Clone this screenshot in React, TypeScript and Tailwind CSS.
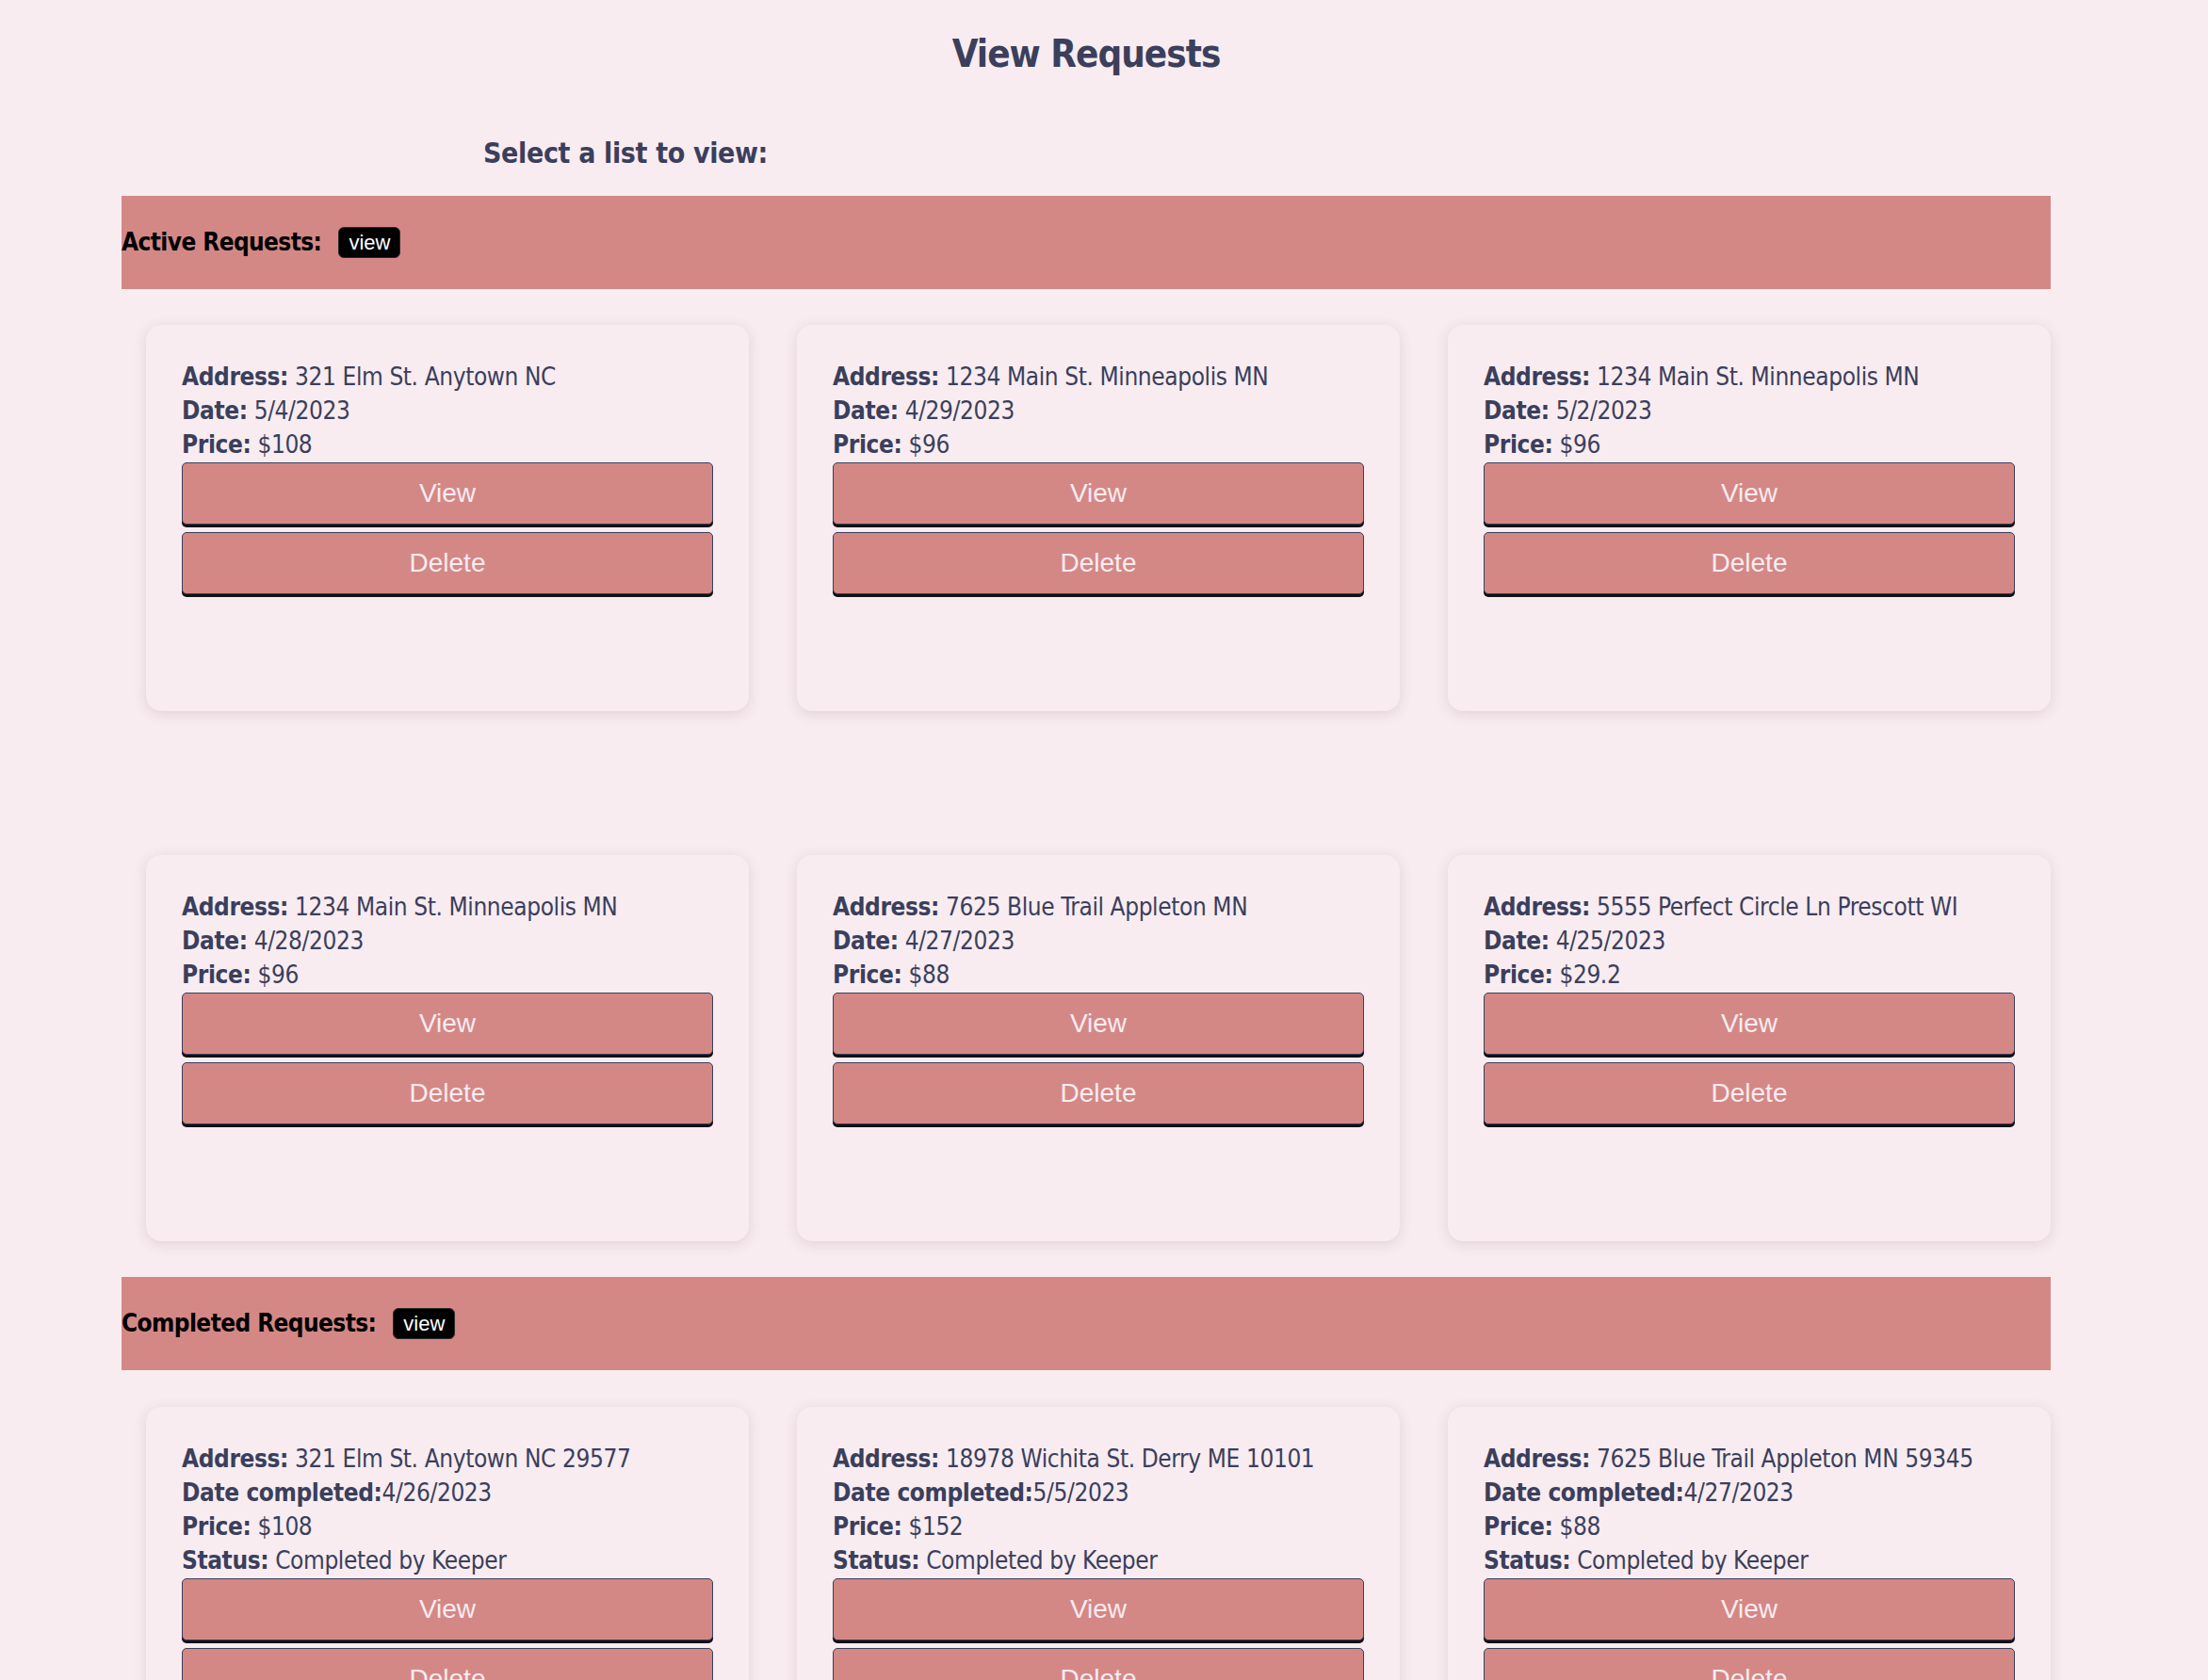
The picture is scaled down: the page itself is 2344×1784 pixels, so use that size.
import React from "react";

const tahoma = '"DejaVu Sans Condensed", "DejaVu Sans", Tahoma, sans-serif';
const arial = '"Liberation Sans", Arial, sans-serif';

type Row = { label: string; value: string; sep?: string };

const active: Row[][] = [
  [
    { label: "Address:", value: "321 Elm St. Anytown NC" },
    { label: "Date:", value: "5/4/2023" },
    { label: "Price:", value: "$108" },
  ],
  [
    { label: "Address:", value: "1234 Main St. Minneapolis MN" },
    { label: "Date:", value: "4/29/2023" },
    { label: "Price:", value: "$96" },
  ],
  [
    { label: "Address:", value: "1234 Main St. Minneapolis MN" },
    { label: "Date:", value: "5/2/2023" },
    { label: "Price:", value: "$96" },
  ],
  [
    { label: "Address:", value: "1234 Main St. Minneapolis MN" },
    { label: "Date:", value: "4/28/2023" },
    { label: "Price:", value: "$96" },
  ],
  [
    { label: "Address:", value: "7625 Blue Trail Appleton MN" },
    { label: "Date:", value: "4/27/2023" },
    { label: "Price:", value: "$88" },
  ],
  [
    { label: "Address:", value: "5555 Perfect Circle Ln Prescott WI" },
    { label: "Date:", value: "4/25/2023" },
    { label: "Price:", value: "$29.2" },
  ],
];

const completed: Row[][] = [
  [
    { label: "Address:", value: "321 Elm St. Anytown NC 29577" },
    { label: "Date completed:", value: "4/26/2023", sep: "" },
    { label: "Price:", value: "$108" },
    { label: "Status:", value: "Completed by Keeper" },
  ],
  [
    { label: "Address:", value: "18978 Wichita St. Derry ME 10101" },
    { label: "Date completed:", value: "5/5/2023", sep: "" },
    { label: "Price:", value: "$152" },
    { label: "Status:", value: "Completed by Keeper" },
  ],
  [
    { label: "Address:", value: "7625 Blue Trail Appleton MN 59345" },
    { label: "Date completed:", value: "4/27/2023", sep: "" },
    { label: "Price:", value: "$88" },
    { label: "Status:", value: "Completed by Keeper" },
  ],
];

function Btn({ children, className = "" }: { children: React.ReactNode; className?: string }) {
  return (
    <button
      className={
        "block w-full h-[66px] rounded-[5px] border border-[#3b3f5c] bg-[#d48886] text-[#f8ecf0] text-[28px] leading-none tracking-normal shadow-[0_3px_0_#111014] " +
        className
      }
      style={{ fontFamily: arial, fontStretch: "normal" }}
    >
      {children}
    </button>
  );
}

function Card({ rows }: { rows: Row[] }) {
  return (
    <div className="h-[410px] rounded-[16px] bg-[#f8ecf0] shadow-[0_3px_14px_rgba(110,70,80,0.16)] px-[38px] pt-[37px]">
      {rows.map((r, i) => (
        <p
          key={i}
          className="text-[26px] leading-[36px] tracking-[-0.4px] text-[#3b3f5c] whitespace-nowrap"
        >
          <b>{r.label}</b>
          {r.sep === undefined ? " " : r.sep}
          {r.value}
        </p>
      ))}
      <Btn className="mt-[1px]">View</Btn>
      <Btn className="mt-[8px]">Delete</Btn>
    </div>
  );
}

function Bar({ title }: { title: string }) {
  return (
    <div className="h-[99px] bg-[#d48886] flex items-center gap-[18px]">
      <span className="text-[26px] tracking-[-0.6px] font-bold text-black">{title}</span>
      <span
        className="h-[33px] px-[10px] rounded-[6px] bg-black border border-[#2a2a2a] text-white text-[22px] flex items-center"
        style={{ fontFamily: arial, fontStretch: "normal" }}
      >
        view
      </span>
    </div>
  );
}

export default function App() {
  return (
    <div
      className="min-h-screen bg-[#f8ecf0] pb-[60px]"
      style={{ fontFamily: tahoma, fontStretch: "condensed" }}
    >
      <div className="ml-[129px] w-[2048px]">
        <h1 className="pt-[37px] text-center text-[40px] leading-none tracking-[-1px] font-bold text-[#3b3f5c]">
          View Requests
        </h1>
        <h3 className="mt-[71px] ml-[384px] text-[30px] leading-none tracking-[-0.35px] font-bold text-[#3b3f5c]">
          Select a list to view:
        </h3>
        <div className="mt-[30px]">
          <Bar title="Active Requests:" />
        </div>
        <div className="grid grid-cols-3 gap-x-[51px] gap-y-[153px] pl-[26px] pt-[38px] pb-[38px]">
          {active.map((r, i) => (
            <Card key={i} rows={r} />
          ))}
        </div>
        <Bar title="Completed Requests:" />
        <div className="grid grid-cols-3 gap-x-[51px] gap-y-[153px] pl-[26px] pt-[39px]">
          {completed.map((r, i) => (
            <Card key={i} rows={r} />
          ))}
        </div>
      </div>
    </div>
  );
}
